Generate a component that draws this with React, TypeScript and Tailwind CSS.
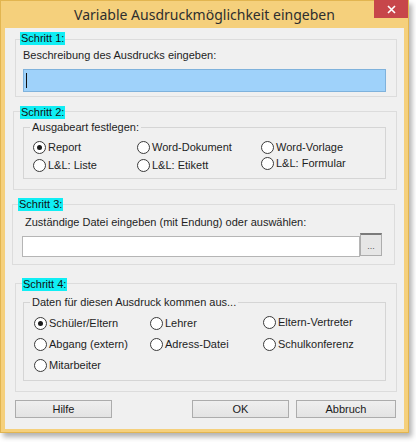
import React from 'react';

function Radio({ label, checked }: { label: string; checked?: boolean }) {
    return (
        <div className="flex items-center h-[18px]">
            <span className="w-[13px] h-[13px] rounded-full border border-[#3a3a3a] bg-white flex items-center justify-center shrink-0">
                {checked && <span className="w-[5px] h-[5px] rounded-full bg-[#1a1a1a]" />}
            </span>
            <span className="ml-[2px] whitespace-nowrap">{label}</span>
        </div>
    );
}

function Step({ label, className }: { label: string; className: string }) {
    return (
        <span className={`absolute h-[13px] px-[1px] bg-[#10eef4] leading-[13px] text-[#111] ${className}`}>
            {label}
        </span>
    );
}

function Caption({ text }: { text: string }) {
    return (
        <span className="absolute -top-[8px] left-[6px] px-[2px] h-[14px] leading-[14px] bg-[#f0f0f0] whitespace-nowrap">
            {text}
        </span>
    );
}

function Btn({ text, className }: { text: string; className: string }) {
    return (
        <button className={`h-[18px] border border-[#acacac] bg-gradient-to-b from-[#efefef] to-[#e3e3e3] text-[11px] leading-[16px] text-[#1a1a1a] ${className}`}>
            {text}
        </button>
    );
}

export default function App() {
    return (
        <div className="w-[416px] h-[442px] bg-white font-['Liberation_Sans',Arial,sans-serif] text-[11px] text-[#1e1e1e]">
            <div className="w-[409px] h-[433px] bg-[#f5d07c] border border-[#e2b550] shadow-[3px_4px_5px_rgba(0,0,0,0.3)] flex flex-col">
                {/* title bar */}
                <div className="h-[27px] relative flex items-center justify-center shrink-0">
                    <span className="font-['Noto_Sans',sans-serif] text-[14px] text-[#2e2e2e]">
                        Variable Ausdruckmöglichkeit eingeben
                    </span>
                    <div className="absolute -top-[1px] right-[0px] w-[34px] h-[18px] bg-[#c7464a] flex items-center justify-center">
                        <svg width="9" height="9" viewBox="0 0 9 9">
                            <path d="M1 1L8 8M8 1L1 8" stroke="#fff" strokeWidth="1.6" />
                        </svg>
                    </div>
                </div>

                {/* client */}
                <div className="mx-[4px] mb-[3px] flex-1 bg-[#f0f0f0] flex flex-col">
                    {/* Schritt 1 */}
                    <div className="relative mt-[11px] ml-[10px] w-[382px] h-[58px] border border-[#dcdcdc] pl-[7px] pt-[8px]">
                        <Step label="Schritt 1:" className="-top-[8px] left-[4px]" />
                        <div className="h-[14px] leading-[14px]">Beschreibung des Ausdrucks eingeben:</div>
                        <div className="mt-[7px] w-[363px] h-[23px] bg-[#9fd2fa] border border-[#7fb2dc] flex items-center">
                            <span className="ml-[2px] w-[1px] h-[15px] bg-[#111]" />
                        </div>
                    </div>

                    {/* Schritt 2 */}
                    <div className="relative mt-[14px] ml-[8px] w-[384px] h-[79px] border border-[#dcdcdc] pl-[9px] pt-[15px]">
                        <Step label="Schritt 2:" className="-top-[6px] left-[6px]" />
                        <div className="relative w-[363px] h-[52px] border border-[#d5d5d5] pl-[9px] pt-[10px]">
                            <Caption text="Ausgabeart festlegen:" />
                            <div className="grid grid-cols-[104px_124px_1fr]">
                                <Radio label="Report" checked />
                                <Radio label="Word-Dokument" />
                                <Radio label="Word-Vorlage" />
                                <Radio label="L&L: Liste" />
                                <Radio label="L&L: Etikett" />
                                <div className="-mt-[2px]">
                                    <Radio label="L&L: Formular" />
                                </div>
                            </div>
                        </div>
                    </div>

                    {/* Schritt 3 */}
                    <div className="relative mt-[14px] ml-[7px] w-[383px] h-[61px] border border-[#dcdcdc] pl-[9px] pt-[10px]">
                        <Step label="Schritt 3:" className="-top-[7px] left-[5px]" />
                        <div className="h-[14px] leading-[14px] pl-[3px]">Zuständige Datei eingeben (mit Endung) oder auswählen:</div>
                        <div className="mt-[4px] flex items-start">
                            <div className="mt-[3px] w-[338px] h-[21px] bg-white border border-[#b5b5b5]" />
                            <div className="w-[22px] h-[23px] bg-[#e6e6e6] border border-[#adadad] border-t-[2px] border-t-[#7a7a7a] flex items-center justify-center text-[9px] text-[#555] leading-none pt-[2px]">
                                ...
                            </div>
                        </div>
                    </div>

                    {/* Schritt 4 */}
                    <div className="relative mt-[18px] ml-[10px] w-[382px] h-[109px] border border-[#dcdcdc] pl-[7px] pt-[18px]">
                        <Step label="Schritt 4:" className="-top-[6px] left-[6px]" />
                        <div className="relative w-[363px] h-[79px] border border-[#d5d5d5] pl-[10px] pt-[11px]">
                            <Caption text="Daten für diesen Ausdruck kommen aus..." />
                            <div className="grid grid-cols-[116px_113px_1fr] gap-y-[3px]">
                                <Radio label="Schüler/Eltern" checked />
                                <Radio label="Lehrer" />
                                <div className="-mt-[1px]">
                                    <Radio label="Eltern-Vertreter" />
                                </div>
                                <Radio label="Abgang (extern)" />
                                <Radio label="Adress-Datei" />
                                <Radio label="Schulkonferenz" />
                                <Radio label="Mitarbeiter" />
                            </div>
                        </div>
                    </div>

                    {/* buttons */}
                    <div className="mt-[8px] flex">
                        <Btn text="Hilfe" className="ml-[10px] w-[97px]" />
                        <Btn text="OK" className="ml-[80px] w-[97px]" />
                        <Btn text="Abbruch" className="ml-[7px] w-[100px]" />
                    </div>
                </div>
            </div>
        </div>
    );
}
